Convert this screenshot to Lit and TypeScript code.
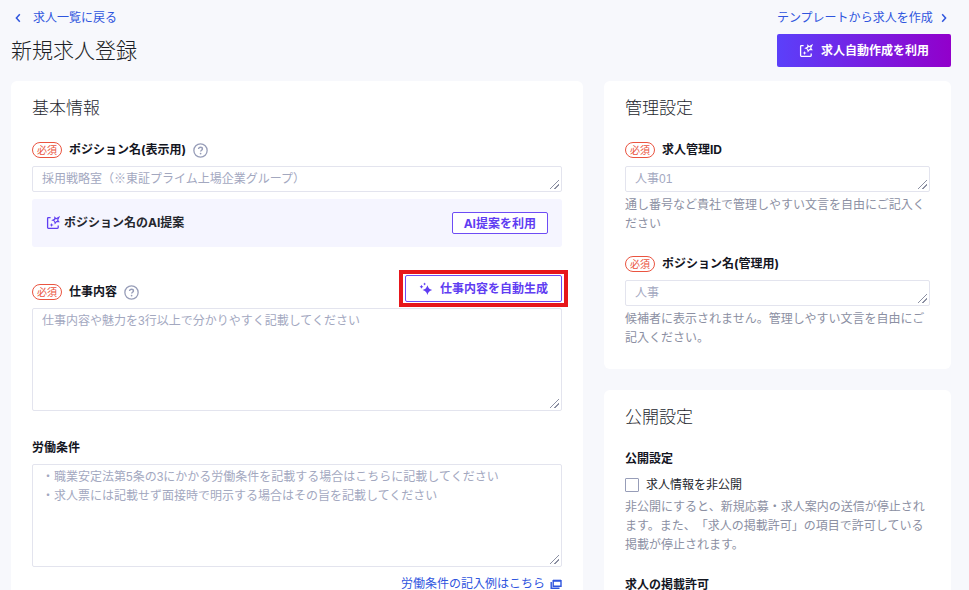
import { LitElement, html, css, svg, nothing } from "lit";
import { customElement, property } from "lit/decorators.js";

const base = css`
  :host {
    box-sizing: border-box;
  }
  *, *::before, *::after {
    box-sizing: border-box;
  }
  svg {
    display: block;
    flex: none;
    fill: none;
    stroke: currentColor;
  }
`;

const chevron = (left: boolean) => html`<svg width="6" height="10" viewBox="0 0 6 10" stroke-width="1.5" aria-hidden="true">
  ${left ? svg`<path d="M4.8 1.2 1.4 5l3.4 3.8" />` : svg`<path d="M1.2 1.2 4.6 5 1.2 8.8" />`}
</svg>`;

const aiEdit = html`<svg width="14" height="14" viewBox="0 0 14 14" stroke-width="1.3" aria-hidden="true">
  <path d="M4.6 1.6H2.4a.8.8 0 0 0-.8.8v9.2c0 .5.3.8.8.8h9a.8.8 0 0 0 .8-.8V9.6" />
  <path d="M8.800 1.500 10.100 2.800 12.900 1.300 11.600 4.100 12.700 5.700 10.600 5.500 9.100 7.300 8.600 5.100 6.600 4.200 8.700 3.300Z" stroke-width="1.100" />
  <path d="M5.600 6.900l.6 1.500 1.500.6-1.500.6-.6 1.500-.6-1.500-1.500-.6 1.500-.6Z" fill="currentColor" stroke="none" />
</svg>`;

const sparkles = html`<svg width="14" height="14" viewBox="0 0 14 14" aria-hidden="true">
  <g fill="currentColor" stroke="none">
    <path d="M8.400 3.200c.9 2.900 1.900 3.900 4.800 4.800-2.900.9-3.900 1.900-4.800 4.900-.9-3-1.900-4-4.800-4.900C6.500 7.100 7.500 6.100 8.400 3.200Z" />
    <path d="M2.500 2.700c.4 1.200.8 1.600 2 2-1.200.4-1.600.8-2 2-.4-1.200-.8-1.600-2-2 1.200-.4 1.600-.8 2-2Z" />
    <path d="M5.600.5c.3.900.6 1.200 1.500 1.500-.9.300-1.200.6-1.500 1.500-.3-.9-.6-1.200-1.500-1.500.9-.3 1.200-.6 1.500-1.500Z" />
  </g>
</svg>`;

const help = html`<svg width="15" height="15" viewBox="0 0 14 14" stroke-width="1.2" aria-hidden="true">
  <circle cx="7" cy="7" r="6.200" />
  <path d="M5.200 5.700c0-1.100.8-1.700 1.800-1.700s1.800.6 1.800 1.500c0 1.200-1.700 1.300-1.700 2.500" stroke-width="1.300" />
  <circle cx="7.100" cy="9.900" r=".8" fill="currentColor" stroke="none" />
</svg>`;

const windows = html`<svg width="12" height="10" viewBox="0 0 12 10" aria-hidden="true">
  <path d="M3.200 1.600h7.800v5.600H3.200Z" stroke-width="1.400" />
  <path d="M3 1.700h8" stroke-width="2" />
  <path d="M1.200 3v6.200h8.300" stroke-width="1.400" />
</svg>`;

@customElement("form-field")
class FormField extends LitElement {
  @property() label = "";
  @property() placeholder = "";
  @property() note = "";
  @property({ type: Boolean }) required = false;
  @property({ type: Boolean }) hint = false;
  @property({ type: Boolean }) tall = false;

  static styles = [
    base,
    css`
      :host {
        display: block;
      }
      .head {
        display: flex;
        align-items: flex-end;
        justify-content: space-between;
        margin-bottom: 6px;
      }
      .title {
        display: flex;
        align-items: center;
        gap: 7px;
        height: 20px;
      }
      label {
        color: #14161f;
        font-weight: 700;
        line-height: 20px;
      }
      .badge {
        display: flex;
        align-items: center;
        justify-content: center;
        width: 30px;
        height: 16px;
        border: 1px solid #ea5440;
        border-radius: 8px;
        color: #ea5440;
        font-size: 10px;
        line-height: 14px;
      }
      .hint {
        display: flex;
        padding: 0;
        border: 0;
        background: none;
        color: #979db8;
      }
      textarea {
        display: block;
        width: 100%;
        height: 26px;
        padding: 3px 9px;
        overflow: hidden;
        border: 1px solid #e3e4ee;
        border-radius: 2px;
        background: #fff;
        color: #14161f;
        font: inherit;
        font-family: "Liberation Sans", "Noto Sans CJK JP", sans-serif;
        line-height: 19px;
        resize: vertical;
      }
      .tall {
        height: 103px;
      }
      textarea::placeholder {
        color: #a3a8bf;
        opacity: 1;
      }
      textarea::-webkit-resizer {
        background: linear-gradient(
            135deg,
            transparent 6px,
            #8c90a3 6px 7px,
            transparent 7px 9px,
            #8c90a3 9px 10px,
            transparent 10px
          )
          right 2px bottom 2px / 9px 9px no-repeat;
      }
      p {
        margin: 3px 0 0;
        color: #8c90a3;
        line-height: 19px;
      }
    `,
  ];

  render() {
    return html`
      <div class="head">
        <div class="title">
          ${this.required ? html`<span class="badge">必須</span>` : nothing}
          <label for="text">${this.label}</label>
          ${this.hint ? html`<button class="hint" type="button" aria-label="ヘルプ">${help}</button>` : nothing}
        </div>
        <slot name="action"></slot>
      </div>
      <textarea id="text" class=${this.tall ? "tall" : ""} placeholder=${this.placeholder}></textarea>
      ${this.note ? html`<p>${this.note}</p>` : nothing}
    `;
  }
}

@customElement("app-root")
class AppRoot extends LitElement {
  static styles = [
    base,
    css`
      :host {
        display: block;
        height: 100vh;
        padding: 8px 18px 0 11px;
        overflow-y: auto;
        scrollbar-width: none;
        background: #f7f8fc;
        color: #25272e;
        font-family: Inter, "Noto Sans CJK JP", sans-serif;
        font-size: 12px;
        line-height: 20px;
        text-spacing-trim: space-all;
      }
      a {
        display: flex;
        align-items: center;
        color: #2f55de;
        text-decoration: none;
      }
      button {
        display: flex;
        align-items: center;
        justify-content: center;
        border: 1px solid #6d4cf5;
        border-radius: 2px;
        background: #fff;
        color: #5f3df2;
        font: inherit;
        font-weight: 700;
        line-height: 18px;
      }
      h1, h2, h3 {
        margin: 0;
        font-weight: 300;
      }
      .top {
        display: flex;
        justify-content: space-between;
        margin-bottom: 14px;
      }
      .left {
        display: flex;
        flex-direction: column;
        gap: 8px;
      }
      .right {
        display: flex;
        flex-direction: column;
        gap: 6px;
      }
      .back {
        gap: 12px;
        padding-left: 4px;
      }
      .template {
        gap: 8px;
        padding-right: 3px;
      }
      h1 {
        color: #1d1f26;
        font-size: 21px;
        line-height: 30px;
      }
      .auto {
        gap: 8px;
        height: 33px;
        padding: 0 22px;
        border: 0;
        background: linear-gradient(90deg, #5b40fa, #9200cb);
        color: #fff;
      }
      .columns {
        display: grid;
        grid-template-columns: 572fr 347fr;
        gap: 21px;
      }
      .side {
        display: flex;
        flex-direction: column;
        gap: 21px;
      }
      .card {
        padding: 17px 21px 22px;
        border-radius: 6px;
        background: #fff;
      }
      h2 {
        margin-bottom: 22px;
        font-size: 17px;
        line-height: 20px;
      }
      .panel {
        display: flex;
        align-items: center;
        justify-content: space-between;
        height: 48px;
        margin: 7px 0 28px;
        padding: 0 14px;
        border-radius: 3px;
        background: #f5f5ff;
      }
      .name {
        display: flex;
        align-items: center;
        gap: 4px;
        font-weight: 700;
      }
      .name svg {
        color: #5f3df2;
      }
      .suggest {
        height: 22px;
        padding: 1px 11px 0;
      }
      .generate {
        position: relative;
        gap: 7px;
        height: 27px;
        padding: 0 13px;
      }
      .generate::after {
        position: absolute;
        inset: -6px -7px;
        border: 4px solid #e7161b;
        content: "";
      }
      .gap {
        margin-bottom: 27px;
      }
      .near {
        margin-bottom: 21px;
      }
      .example {
        justify-content: flex-end;
        gap: 5px;
        margin-top: 7px;
      }
      h3 {
        color: #14161f;
        font-size: 12px;
        font-weight: 700;
        line-height: 20px;
      }
      .check {
        display: flex;
        align-items: center;
        gap: 7px;
        margin-top: 6px;
        line-height: 19px;
      }
      .check input {
        width: 14px;
        height: 14px;
        margin: 0;
        border: 1px solid #979db8;
        border-radius: 1px;
        background: #fff;
        appearance: none;
      }
      p {
        margin: 3px 0 21px;
        color: #8c90a3;
        line-height: 19px;
      }
    `,
  ];

  render() {
    return html`
      <header class="top">
        <div class="left">
          <a class="back" href="#jobs">${chevron(true)}求人一覧に戻る</a>
          <h1>新規求人登録</h1>
        </div>
        <div class="right">
          <a class="template" href="#templates">テンプレートから求人を作成${chevron(false)}</a>
          <button class="auto" type="button">${aiEdit}求人自動作成を利用</button>
        </div>
      </header>
      <main class="columns">
        <section class="card">
          <h2>基本情報</h2>
          <form-field label="ポジション名(表示用)" placeholder="採用戦略室（※東証プライム上場企業グループ）" required hint></form-field>
          <div class="panel">
            <span class="name">${aiEdit}ポジション名のAI提案</span>
            <button class="suggest" type="button">AI提案を利用</button>
          </div>
          <form-field class="gap" label="仕事内容" placeholder="仕事内容や魅力を3行以上で分かりやすく記載してください" required hint tall>
            <button class="generate" slot="action" type="button">${sparkles}仕事内容を自動生成</button>
          </form-field>
          <form-field
            label="労働条件"
            placeholder=${"・職業安定法第5条の3にかかる労働条件を記載する場合はこちらに記載してください\n・求人票には記載せず面接時で明示する場合はその旨を記載してください"}
            tall
          ></form-field>
          <a class="example" href="#example">労働条件の記入例はこちら${windows}</a>
        </section>
        <div class="side">
          <section class="card">
            <h2>管理設定</h2>
            <form-field class="near" label="求人管理ID" placeholder="人事01" note="通し番号など貴社で管理しやすい文言を自由にご記入ください" required></form-field>
            <form-field label="ポジション名(管理用)" placeholder="人事" note="候補者に表示されません。管理しやすい文言を自由にご記入ください。" required></form-field>
          </section>
          <section class="card">
            <h2>公開設定</h2>
            <h3>公開設定</h3>
            <label class="check"><input type="checkbox" />求人情報を非公開</label>
            <p>非公開にすると、新規応募・求人案内の送信が停止されます。また、「求人の掲載許可」の項目で許可している掲載が停止されます。</p>
            <h3>求人の掲載許可</h3>
          </section>
        </div>
      </main>
    `;
  }
}
